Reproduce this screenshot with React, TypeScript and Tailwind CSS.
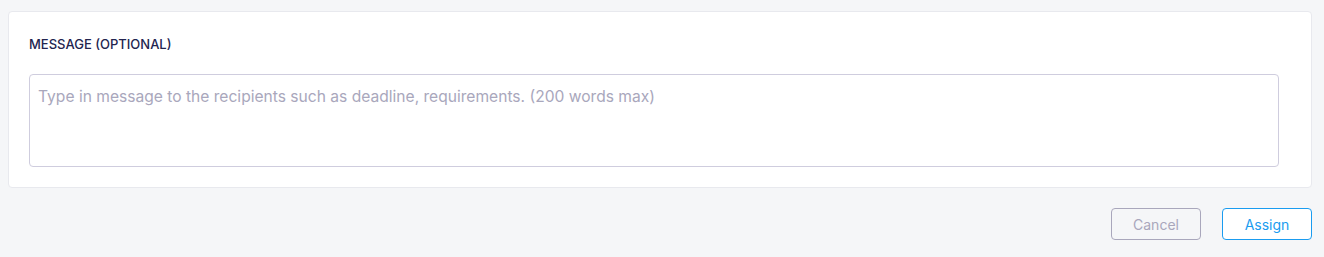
export default function App() {
  return (
    <div
      className="min-h-[257px] w-full bg-[#f5f6f8] pl-2 pr-3 pt-[11px]"
      style={{ fontFamily: 'Inter, "Noto Sans", sans-serif' }}
    >
      <section className="rounded border border-[#e8e9ee] bg-white pl-5 pr-5 pt-6 pb-5">
        <label className="block text-[13px] font-medium uppercase leading-4 text-[#23244f]">
          Message (optional)
        </label>
        <textarea
          className="mt-[22px] block h-[93px] w-[1250px] resize-none rounded border border-[#cfcdde] px-2 pt-3 pb-2 text-[15.6px] leading-5 text-[#23244f] placeholder:text-[#a9a7bc] outline-none"
          placeholder="Type in message to the recipients such as deadline, requirements. (200 words max)"
        />
      </section>
      <div className="mt-5 flex justify-end gap-[21px]">
        <button className="h-8 w-[90px] rounded border border-[#a9a7bc] bg-transparent text-[14px] text-[#a9a7bc]">
          Cancel
        </button>
        <button className="h-8 w-[90px] rounded border border-[#1a9cf0] bg-white text-[14px] text-[#1a9cf0]">
          Assign
        </button>
      </div>
    </div>
  );
}
